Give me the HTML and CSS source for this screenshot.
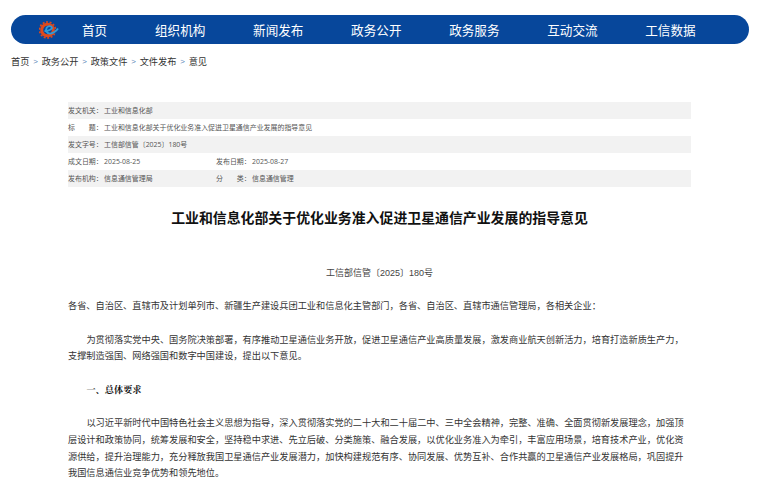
FILE: index.html
```html
<!DOCTYPE html>
<html lang="zh">
<head>
<meta charset="utf-8">
<title>意见</title>
<link rel="stylesheet" href="styles.css">
</head>
<body>
<nav class="nav">
  <svg class="logo" viewBox="0 0 20 20" width="20" height="20" aria-hidden="true">
    <circle cx="8.5" cy="10" r="5.8" fill="none" stroke="#e0491b" stroke-width="3"/>
    <circle cx="8.5" cy="10" r="8" fill="none" stroke="#e0491b" stroke-width="1.6" stroke-dasharray="2 1.6"/>
    <path d="M5.5 11 C9 11 12 9.5 13 8 C12.5 5.8 9.5 5.5 7.8 7.5 C6 10.5 8 14 11.5 13.6 C14.5 13 17 11.5 19 8.5" fill="none" stroke="#2f9bd8" stroke-width="1.9"/>
  </svg>
  <a class="nav-first">首页</a>
  <a class="nav-item">组织机构</a>
  <a class="nav-item">新闻发布</a>
  <a class="nav-item">政务公开</a>
  <a class="nav-item">政务服务</a>
  <a class="nav-item">互动交流</a>
  <a class="nav-item">工信数据</a>
</nav>
<div class="crumbs">
  <span>首页</span><i>&gt;</i><span>政务公开</span><i>&gt;</i><span>政策文件</span><i>&gt;</i><span>文件发布</span><i>&gt;</i><span>意见</span>
</div>
<main class="doc">
  <div class="meta">
    <div class="row"><span class="label">发文机关：</span><span>工业和信息化部</span></div>
    <div class="row"><span class="label">标&emsp;&emsp;题：</span><span>工业和信息化部关于优化业务准入促进卫星通信产业发展的指导意见</span></div>
    <div class="row"><span class="label">发文字号：</span><span>工信部信管〔2025〕180号</span></div>
    <div class="row"><span class="label">成文日期：</span><span class="half">2025-08-25</span><span class="label">发布日期：</span><span>2025-08-27</span></div>
    <div class="row"><span class="label">发布机构：</span><span class="half">信息通信管理局</span><span class="label">分&emsp;&emsp;类：</span><span>信息通信管理</span></div>
  </div>
  <h1 class="title">工业和信息化部关于优化业务准入促进卫星通信产业发展的指导意见</h1>
  <p class="docno">工信部信管〔2025〕180号</p>
  <p class="para addr">各省、自治区、直辖市及计划单列市、新疆生产建设兵团工业和信息化主管部门，各省、自治区、直辖市通信管理局，各相关企业：</p>
  <p class="para indent gap">为贯彻落实党中央、国务院决策部署，有序推动卫星通信业务开放，促进卫星通信产业高质量发展，激发商业航天创新活力，培育打造新质生产力，支撑制造强国、网络强国和数字中国建设，提出以下意见。</p>
  <p class="para indent gap head">一、总体要求</p>
  <p class="para indent gap">以习近平新时代中国特色社会主义思想为指导，深入贯彻落实党的二十大和二十届二中、三中全会精神，完整、准确、全面贯彻新发展理念，加强顶层设计和政策协同，统筹发展和安全，坚持稳中求进、先立后破、分类施策、融合发展，以优化业务准入为牵引，丰富应用场景，培育技术产业，优化资源供给，提升治理能力，充分释放我国卫星通信产业发展潜力，加快构建规范有序、协同发展、优势互补、合作共赢的卫星通信产业发展格局，巩固提升我国信息通信业竞争优势和领先地位。</p>
</main>
</body>
</html>
```
FILE: styles.css
```css
html, body { margin: 0; padding: 0; }
body {
  background: #fff;
  color: #333;
  font-family: "Liberation Sans", "Noto Sans CJK SC", sans-serif;
  height: 482px;
  overflow: hidden;
}
.nav {
  display: flex;
  align-items: center;
  height: 29px;
  margin: 15px 21px 0 11px;
  padding-left: 28px;
  background: #07479b;
  border-radius: 15px;
  color: #fff;
  font-size: 12.6px;
}
.logo { flex: none; width: 20px; height: 20px; }
.nav-first { margin-left: 23px; width: 73px; }
.nav-item { width: 98.05px; }
.crumbs {
  display: flex;
  align-items: center;
  margin: 11px 0 0 11px;
  font-size: 9.2px;
  line-height: 14px;
  color: #333;
}
.crumbs i { font-style: normal; color: #5a86b8; margin: 0 3.8px; font-size: 8px; }
.doc { margin: 33px 79px 0 68px; }
.meta { font-family: "Open Sans", "Noto Sans CJK SC", sans-serif; font-size: 6.95px; color: #555; }
.row {
  display: flex;
  align-items: baseline;
  height: 17.1px;
  line-height: 17.1px;
}
.row:nth-child(odd) { background: #f2f2f2; }
.label { flex: none; width: 36px; }
.half { width: 112px; }
.title {
  margin: 21.5px 0 0;
  font-size: 13.9px;
  line-height: 18px;
  font-weight: 700;
  color: #111;
  text-align: center;
}
.docno {
  margin: 38px 0 0;
  font-size: 9px;
  line-height: 16px;
  color: #444;
  text-align: center;
}
.para {
  margin: 0;
  font-size: 9.2px;
  line-height: 16.8px;
  color: #333;
}
.addr { margin-top: 17px; }
.indent { text-indent: 2em; }
.gap { margin-top: 16.8px; }
.head { margin-top: 16.2px; font-family: "Noto Serif CJK SC", "Liberation Serif", "Noto Sans CJK SC", serif; font-weight: 700; color: #111; }
```
